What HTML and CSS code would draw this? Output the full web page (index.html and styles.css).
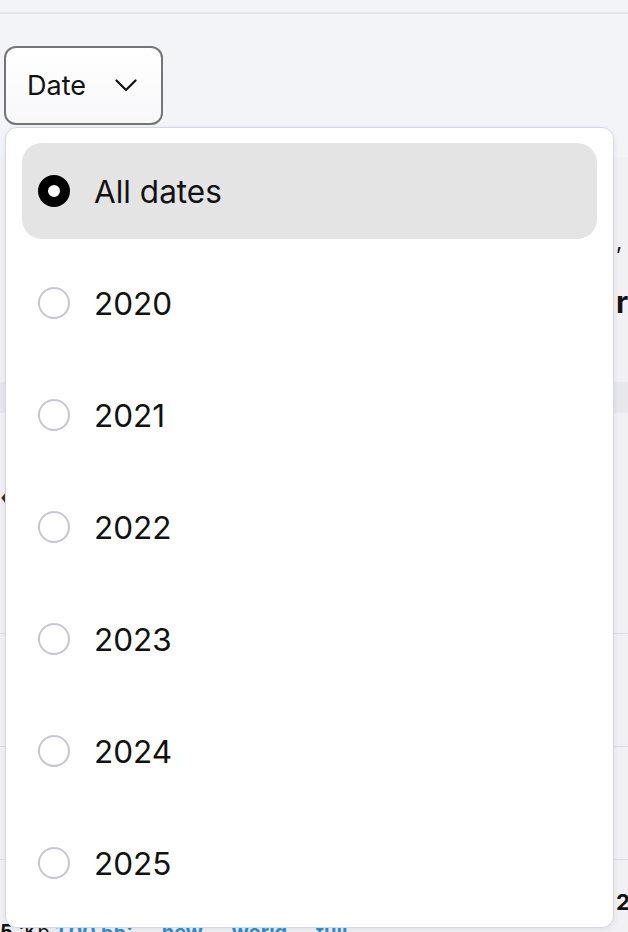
FILE: index.html
```html
<!DOCTYPE html>
<html lang="en">
<head>
    <meta charset="UTF-8">
    <meta name="viewport" content="width=device-width, initial-scale=1.0">
    <title>Results</title>
    <link rel="stylesheet" href="styles.css">
</head>
<body>
    <div class="topbar"></div>

    <div class="toolbar">
        <button class="date-btn">
            Date
            <svg class="chevron" width="22" height="13" viewBox="0 0 22 13">
                <polyline points="1.5,1.5 11,11 20.5,1.5" fill="none" stroke="#111" stroke-width="2.2" stroke-linecap="round" stroke-linejoin="round"/>
            </svg>
        </button>
    </div>

    <div class="results">
        <div class="result first">
            <span class="result-side">,</span>
            <span class="result-side bold big">r</span>
        </div>
        <div class="band"></div>
        <div class="result second">
            <span class="result-side left">‹</span>
        </div>
        <div class="result line"></div>
        <div class="result line"></div>
        <div class="result last">
            <span class="result-side bold">28</span>
        </div>
        <div class="footer-text"><b>5</b> :Kb <span class="link">1 00 55: ... new ... world ... full</span></div>
    </div>

    <div class="menu">
        <label class="option selected">
            <span class="radio"></span>
            <span class="option-label">All dates</span>
        </label>
        <label class="option">
            <span class="radio"></span>
            <span class="option-label">2020</span>
        </label>
        <label class="option">
            <span class="radio"></span>
            <span class="option-label">2021</span>
        </label>
        <label class="option">
            <span class="radio"></span>
            <span class="option-label">2022</span>
        </label>
        <label class="option">
            <span class="radio"></span>
            <span class="option-label">2023</span>
        </label>
        <label class="option">
            <span class="radio"></span>
            <span class="option-label">2024</span>
        </label>
        <label class="option">
            <span class="radio"></span>
            <span class="option-label">2025</span>
        </label>
    </div>
</body>
</html>
```

FILE: styles.css
```css
body {
    margin: 0;
    height: 932px;
    overflow: hidden;
    background-color: #f3f4f8;
    color: #111;
    font-family: Inter, "Liberation Sans", sans-serif;
}
.topbar {
    height: 12px;
    border-bottom: 2px solid #e3e4e9;
}
.toolbar {
    padding: 32px 0 0 4px;
}
.date-btn {
    display: flex;
    align-items: center;
    gap: 29px;
    width: 159px;
    height: 79px;
    padding: 0 0 0 21px;
    border: 2px solid #757575;
    border-radius: 12px;
    background: linear-gradient(#ffffff, #f8f8fa);
    font-family: inherit;
    font-size: 27px;
    color: #111;
    cursor: pointer;
}
.chevron {
    flex: none;
}
.results {
    margin-top: 32px;
    background: #f1f1f4;
}
.result {
    display: flex;
    flex-direction: column;
    align-items: flex-end;
    border-bottom: 1px solid #dcdce2;
    font-size: 22px;
    line-height: 27px;
    white-space: nowrap;
    box-sizing: border-box;
}
.result-side {
    width: 12px;
    overflow: hidden;
}
.result-side.bold {
    font-weight: 700;
}
.result-side.big {
    font-size: 30px;
    line-height: 34px;
}
.result-side.left {
    align-self: flex-start;
    font-size: 26px;
    font-weight: 700;
    color: #333;
}
.first {
    height: 225px;
    padding-top: 71px;
    gap: 30px;
    border-bottom: none;
}
.band {
    height: 31px;
    background: #e7e7ec;
}
.second {
    height: 221px;
    padding-top: 70px;
}
.line {
    height: 113px;
}
.last {
    height: 62px;
    justify-content: flex-end;
    padding-bottom: 6px;
    border-bottom: none;
}
.footer-text {
    font-size: 20px;
    white-space: nowrap;
    margin-top: -2px;
}
.link {
    color: #2b8fd6;
    font-weight: 700;
}
.menu {
    position: absolute;
    top: 127px;
    left: 5px;
    width: 609px;
    height: 801px;
    box-sizing: border-box;
    padding: 15px 16px 16px;
    display: flex;
    flex-direction: column;
    gap: 16px;
    background: #fff;
    border: 1px solid #d3d6e7;
    border-radius: 12px;
    box-shadow: 0 2px 6px rgba(40, 50, 90, 0.08);
}
.option {
    display: flex;
    align-items: center;
    gap: 24px;
    height: 96px;
    padding-left: 16px;
    border-radius: 20px;
    font-size: 31.5px;
    cursor: pointer;
}
.option.selected {
    background: #e4e4e4;
}
.radio {
    flex: none;
    width: 32px;
    height: 32px;
    box-sizing: border-box;
    border: 2px solid #c6c6d0;
    border-radius: 50%;
    background: #fff;
}
.selected .radio {
    border: 10px solid #000;
}
```
